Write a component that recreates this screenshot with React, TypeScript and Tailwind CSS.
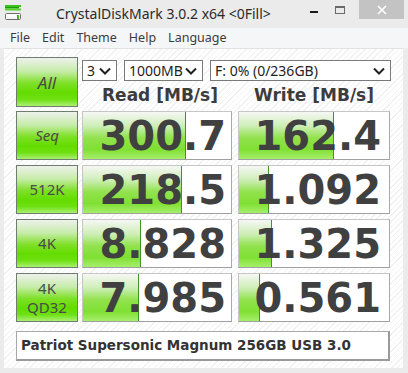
import React from 'react';

const ui = { fontFamily: '"Noto Sans", "Open Sans", sans-serif' };
const num = { fontFamily: '"DejaVu Sans", Verdana, sans-serif' };

const rows = [
  { label: 'Seq', italic: true, read: '300.7', rw: 103, write: '162.4', ww: 95 },
  { label: '512K', read: '218.5', rw: 99, write: '1.092', ww: 30 },
  { label: '4K', read: '8.828', rw: 58, write: '1.325', ww: 33 },
  { label: '4K\nQD32', read: '7.985', rw: 56, write: '0.561', ww: 21 },
];

function AppIcon() {
  return (
    <svg width="16" height="16" viewBox="0 0 16 16">
      <rect x="0" y="0" width="16" height="2" fill="#3cc21c" />
      <rect x="0" y="2" width="14" height="1.5" fill="#1f9a10" />
      <rect x="0" y="3.5" width="16" height="2" fill="#52d62a" />
      <rect x="0.5" y="8.5" width="15" height="6" rx="1" fill="#f4f4f4" stroke="#6e6e6e" />
      <rect x="1.5" y="9.5" width="13" height="2" fill="#ffffff" />
      <rect x="12" y="10" width="2" height="4" fill="#3cb81c" />
    </svg>
  );
}

function Chevron() {
  return (
    <svg width="12" height="8" viewBox="0 0 12 8" className="shrink-0">
      <polyline points="1,1.5 6,6.5 11,1.5" fill="none" stroke="#222" strokeWidth="2" />
    </svg>
  );
}

function Select({ w, text }: { w: string; text: string }) {
  return (
    <div
      className={`${w} h-[21px] bg-white border border-[#7a7a7a] flex items-center justify-between pl-[4px] pr-[5px] text-[14px] text-[#1e1e1e]`}
      style={ui}
    >
      <span className="leading-none">{text}</span>
      <Chevron />
    </div>
  );
}

function Label({ text, italic, size }: { text: string; italic?: boolean; size: string }) {
  return (
    <div
      className={`w-[62px] h-full shrink-0 border border-[#6f7d6f] bg-[linear-gradient(to_bottom,#eef1ec_0%,#c6eca8_28%,#7fe028_52%,#64dc00_72%,#6ee010_86%,#aaf072_100%)] flex items-center justify-center text-center whitespace-pre-line text-[#4a4a4a] leading-[19px] ${italic ? 'italic' : ''} ${size}`}
      style={ui}
    >
      {text}
    </div>
  );
}

function Value({ value, bar, w, pr }: { value: string; bar: number; w: string; pr: string }) {
  return (
    <div className={`${w} h-full relative bg-white border border-[#c6c6c6] border-r-[#a8a8a8] border-b-[#a0a0a0] flex items-center justify-end ${pr}`}>
      <div
        className="absolute left-0 top-0 bottom-0 border-r border-[#3f9424] bg-[linear-gradient(to_bottom,#f6f7f5_0%,#cdeeb6_30%,#92e24e_55%,#80e032_80%,#a6ee6c_100%)]"
        style={{ width: bar }}
      />
      <span className="relative text-[40px] font-bold text-[#404040] leading-none" style={num}>
        {value}
      </span>
    </div>
  );
}

export default function App() {
  return (
    <div className="w-[408px] h-[373px] bg-[#ebebeb] flex flex-col overflow-hidden" style={ui}>
      {/* title bar */}
      <div className="h-[28px] flex items-start shrink-0">
        <div className="pt-[5px] pl-[5px]">
          <AppIcon />
        </div>
        <div className="ml-[35px] mt-[4px] text-[14px] text-[#2a2a2a] leading-[20px]">CrystalDiskMark 3.0.2 x64 &lt;0Fill&gt;</div>
        <div className="ml-auto flex items-start">
          <div className="w-[26px] h-[19px] flex items-center justify-center">
            <div className="w-[8px] h-[2px] bg-[#1a1a1a] mt-[4px]" />
          </div>
          <div className="w-[26px] h-[19px] flex items-center justify-center mr-[6px]">
            <div className="w-[10px] h-[8px] border border-t-2 border-[#6a6a6a]" />
          </div>
          <div className="w-[45px] h-[19px] bg-[#c3c3c3] flex items-center justify-center mr-[4px]">
            <svg width="10" height="10" viewBox="0 0 10 10">
              <path d="M1 1 L9 9 M9 1 L1 9" stroke="#ffffff" strokeWidth="1.6" />
            </svg>
          </div>
        </div>
      </div>

      {/* menu bar */}
      <div className="h-[20px] bg-[#f5f6f7] flex items-center pl-[4px] text-[12.5px] text-[#3c3c3c] shrink-0">
        {['File', 'Edit', 'Theme', 'Help', 'Language'].map((m) => (
          <span key={m} className="px-[6px] leading-none">{m}</span>
        ))}
      </div>

      {/* client */}
      <div className="flex-1 ml-[4px] mr-[5px] mb-[5px] border-t border-[#e2e2e2] bg-[repeating-linear-gradient(135deg,#ffffff_0px,#ffffff_3px,#f1f1f1_3px,#f1f1f1_4px)] pl-[12px] pt-[8px] flex flex-col">
        <div className="flex h-[50px]">
          <Label text="All" italic size="text-[17px]" />
          <div className="ml-[4px] flex flex-col">
            <div className="flex gap-[7px] mt-[3px]">
              <Select w="w-[35px]" text="3" />
              <Select w="w-[79px]" text="1000MB" />
              <Select w="w-[181px]" text="F: 0% (0/236GB)" />
            </div>
            <div className="flex mt-[6px] text-[17px] font-bold text-[#3c3c3c] leading-none" style={num}>
              <div className="w-[150px] text-center pl-[6px]">Read [MB/s]</div>
              <div className="w-[6px]" />
              <div className="w-[152px] text-center">Write [MB/s]</div>
            </div>
          </div>
        </div>

        <div className="flex flex-col gap-[5px] mt-[4px]">
          {rows.map((r) => (
            <div key={r.label} className="flex h-[49px]">
              <Label text={r.label} italic={r.italic} size={r.italic ? 'text-[15px]' : 'text-[15px]'} />
              <div className="ml-[4px] flex">
                <Value value={r.read} bar={r.rw} w="w-[150px]" pr="pr-[5px]" />
                <div className="w-[6px]" />
                <Value value={r.write} bar={r.ww} w="w-[152px]" pr="pr-[8px]" />
              </div>
            </div>
          ))}
        </div>

        <div className="mt-[9px] w-[374px] h-[30px] bg-white border border-[#a8a8a8] border-r-2 border-b-2 border-r-[#9a9a9a] border-b-[#9a9a9a] flex items-center pl-[4px] text-[13.5px] font-bold text-[#333]" style={num}>
          Patriot Supersonic Magnum 256GB USB 3.0
        </div>
      </div>
    </div>
  );
}
